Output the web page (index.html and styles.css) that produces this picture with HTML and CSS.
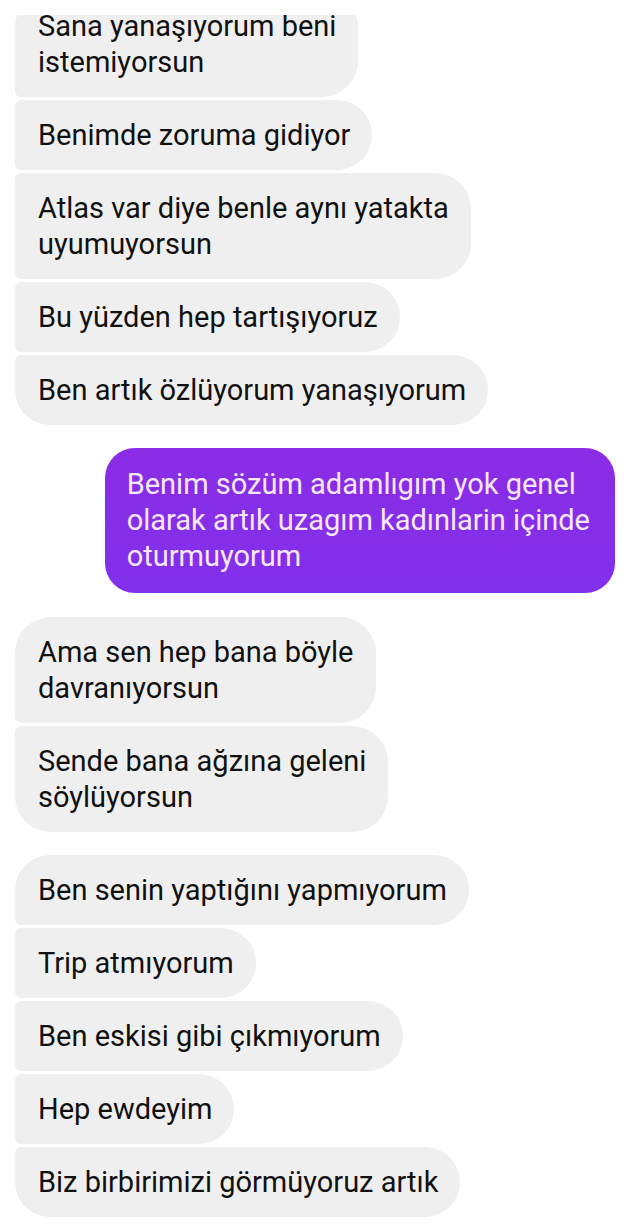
FILE: index.html
```html
<!DOCTYPE html>
<html lang="tr">
<head>
    <meta charset="UTF-8">
    <meta name="viewport" content="width=device-width, initial-scale=1.0">
    <title>Mesajlar</title>
    <link rel="stylesheet" href="styles.css">
</head>
<body>
    <div class="thread">
        <div class="group">
            <div class="msg in">Sana yanaşıyorum beni<br>istemiyorsun</div>
            <div class="msg in">Benimde zoruma gidiyor</div>
            <div class="msg in">Atlas var diye benle aynı yatakta<br>uyumuyorsun</div>
            <div class="msg in">Bu yüzden hep tartışıyoruz</div>
            <div class="msg in">Ben artık özlüyorum yanaşıyorum</div>
        </div>
        <div class="group mine">
            <div class="msg out">Benim sözüm adamlıgım yok genel<br>olarak artık uzagım kadınlarin içinde<br>oturmuyorum</div>
        </div>
        <div class="group">
            <div class="msg in">Ama sen hep bana böyle<br>davranıyorsun</div>
            <div class="msg in">Sende bana ağzına geleni<br>söylüyorsun</div>
        </div>
        <div class="group">
            <div class="msg in">Ben senin yaptığını yapmıyorum</div>
            <div class="msg in">Trip atmıyorum</div>
            <div class="msg in">Ben eskisi gibi çıkmıyorum</div>
            <div class="msg in">Hep ewdeyim</div>
            <div class="msg in">Biz birbirimizi görmüyoruz artık</div>
        </div>
    </div>
</body>
</html>
```

FILE: styles.css
```css
body {
    font-family: Roboto, "Noto Sans", sans-serif;
    margin: 0;
    background-color: #fff;
    color: #111;
}
.thread {
    margin-top: 15px;
    height: 1217px;
    overflow: hidden;
    padding: 0 13px 0 15px;
}
.group {
    display: flex;
    flex-direction: column;
    align-items: flex-start;
    gap: 3px;
    margin-bottom: 23px;
}
/* ilk balon ekranın üstünden taşıyor, kaydırılmış gibi */
.group:first-child {
    margin-top: -24px;
}
.group.mine {
    align-items: flex-end;
    margin-bottom: 24px;
}
.msg {
    font-size: 29px;
    line-height: 36px;
    white-space: nowrap;
    box-sizing: border-box;
}
.in {
    background-color: #efefef;
    padding: 17px 22px 17px 23px;
    border-radius: 6px 36px 36px 6px;
}
.in:first-child {
    border-top-left-radius: 36px;
}
.in:last-child {
    border-bottom-left-radius: 36px;
}
.out {
    padding: 18px 25px 19px 22px;
    border-radius: 30px;
    color: #f8e8ff;
    background: linear-gradient(180deg, #8a2ce4 0%, #8230ec 100%);
}
```
